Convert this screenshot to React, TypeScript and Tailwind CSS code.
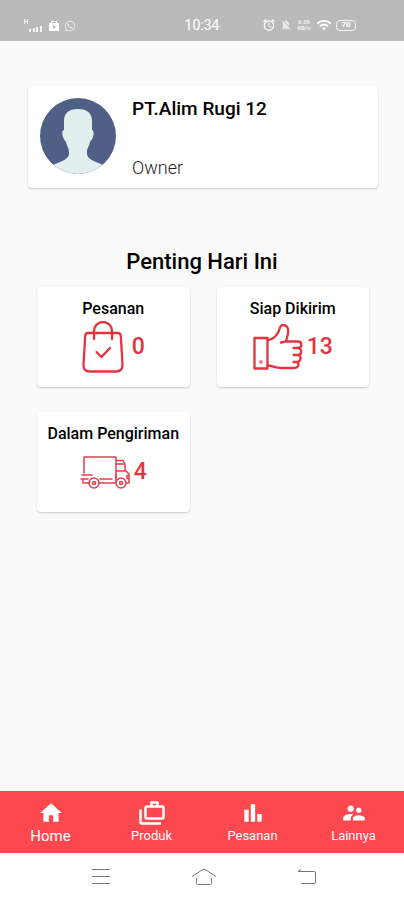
import React from 'react';
import { MdAlarm, MdBarChart, MdHome, MdNotificationsOff, MdSupervisorAccount, MdWifi } from 'react-icons/md';
import { FaWhatsapp } from 'react-icons/fa';

function BagIcon() {
  return (
    <svg width="42" height="52" viewBox="0 0 42 52" fill="none" stroke="#e5343f" strokeWidth="2.300" strokeLinecap="round" strokeLinejoin="round">
      <path d="M6 12H36Q38.500 12 38.800 15L40.500 43Q41 50.500 34 50.500H8Q1 50.500 1.500 43L3.200 15Q3.500 12 6 12Z" />
      <path d="M12 18V10a9 9 0 0 1 18 0v8" />
      <path d="M14.500 31l5 5 8.500-9" />
    </svg>
  );
}

function ThumbIcon() {
  return (
    <svg width="50" height="46" viewBox="0 0 50 46" fill="none" stroke="#e5343f" strokeWidth="2.300" strokeLinecap="round" strokeLinejoin="round">
      <path d="M1.500 14H14.500V44.500H1.500Z" />
      <circle cx="8" cy="38" r="0.500" />
      <path d="M14.500 16C21 16 26 9 27 3.500C28 0 33.500 0 35 5C36 9 34 13 33 17.500H45C49.500 17.500 49.500 24 45 24H40.500" />
      <path d="M28 18.500L33 17.500" />
      <path d="M45 24C49.500 25 49 31 45 31H40.500M45 31C49 32 48 38 44 38H40.500M44 38C47 40 45 44 41 44H28C22 44 19 41.500 14.500 41.500" />
    </svg>
  );
}

function TruckIcon() {
  return (
    <svg width="50" height="33" viewBox="0 0 50 33" fill="none" stroke="#df4149" strokeWidth="1.500" strokeLinecap="round" strokeLinejoin="round">
      <path d="M4 17V1H36V26M2 19H12M1 23H8M3 23V27H9M19 27H36M20 23H32" />
      <path d="M36 4.500H43L45 8V14L49 18V27H46M36 8H45M36 15H45M36 18V22M49 19.500H47V22.500H49" />
      <circle cx="14" cy="27" r="5" />
      <circle cx="14" cy="27" r="1.500" />
      <circle cx="41" cy="27" r="5" />
      <circle cx="41" cy="27" r="1.500" />
    </svg>
  );
}

function CasesIcon() {
  return (
    <svg width="26" height="26" viewBox="0 0 26 26" fill="none" stroke="currentColor" strokeWidth="2.500" strokeLinejoin="round">
      <rect x="6.500" y="6.500" width="18" height="12" rx="1.500" />
      <path d="M12.500 6.500V2.500H18.500V6.500" />
      <path d="M1.500 9.500V22Q1.500 23.500 3 23.500H22" />
    </svg>
  );
}

function Avatar() {
  return (
    <svg width="76" height="76" viewBox="0 0 76 76" className="shrink-0">
      <defs>
        <clipPath id="avatar">
          <circle cx="38" cy="38" r="38" />
        </clipPath>
      </defs>
      <g clipPath="url(#avatar)">
        <path fill="#505f86" d="M0 0H76V76H0Z" />
        <path
          fill="#e3eeee"
          d="M38 11C47 11 52 15 52 23V32C54 32 54 36 53 39C52 42 51 42 50 44C49 49 47 50 47 54C46 61 54 63 63 67L70 76H6L13 67C22 63 30 61 29 54C29 50 27 49 26 44C25 42 24 42 23 39C22 36 22 32 24 32V23C24 15 29 11 38 11Z"
        />
      </g>
    </svg>
  );
}

function StatusBar() {
  return (
    <header className="grid h-[41px] grid-cols-[minmax(0,1fr)_auto_minmax(0,1fr)] items-end bg-[#bababa] px-6 pb-2 text-white">
      <div className="flex items-center gap-1">
        <svg width="20" height="14" viewBox="0 0 20 14" fill="currentColor" opacity="0.850">
          <path d="M0 0h1v2h2V0h1v5H3V3H1v2H0zM5 10h2v3H5zM9 9h2v4H9zM12 8h2v5h-2zM16 7h2v6h-2z" />
        </svg>
        <svg width="12" height="12" viewBox="0 0 12 12" fill="currentColor" fillRule="evenodd">
          <path d="M1 3h2V1h6v2h2v8H1zM4 3h4V2H4zM5 5v4l3-2z" />
        </svg>
        <FaWhatsapp size={12} className="opacity-70" />
      </div>
      <span className="text-sm leading-4">10:34</span>
      <div className="flex items-center justify-end gap-1 pr-6">
        <MdAlarm size={14} />
        <MdNotificationsOff size={12} className="opacity-70" />
        <span className="w-4 text-center text-[6px] leading-[6px] font-bold opacity-80">0.09 KB/s</span>
        <MdWifi size={16} />
        <span className="flex h-[11px] w-5 items-center justify-center rounded-sm border border-white/80 text-[8px] leading-none font-bold">70</span>
      </div>
    </header>
  );
}

const stats = [
  { title: 'Pesanan', count: 0, icon: BagIcon, gap: 'gap-2' },
  { title: 'Siap Dikirim', count: 13, icon: ThumbIcon, gap: 'gap-1' },
  { title: 'Dalam Pengiriman', count: 4, icon: TruckIcon, gap: 'gap-1' },
];

function App() {
  return (
    <div className="flex min-h-screen flex-col bg-[#fafafa] font-['Roboto',sans-serif] text-black">
      <StatusBar />

      <main className="flex-1">
        <section className="mt-[45px] mr-[26px] ml-7 flex items-start gap-4 rounded-sm bg-white px-3 pt-3 pb-[10px] shadow-[0_1px_2px_rgba(0,0,0,0.2)]">
          <Avatar />
          <div className="flex min-h-20 flex-col justify-between">
            <h1 className="text-[19px] leading-[22px] font-medium">PT.Alim Rugi 12</h1>
            <p className="text-lg leading-5 font-light text-[#222]">Owner</p>
          </div>
        </section>

        <h2 className="mt-[61px] text-center text-[22px] leading-[26px] font-medium">Penting Hari Ini</h2>

        <section className="mt-3 grid grid-cols-2 gap-x-[27px] gap-y-[25px] pr-[35px] pl-[37px]">
          {stats.map(({ title, count, icon: Icon, gap }) => (
            <article key={title} className="h-[100px] rounded-sm bg-white pt-3 shadow-[0_1px_2px_rgba(0,0,0,0.2)]">
              <h3 className="text-center text-base leading-5 font-medium whitespace-nowrap">{title}</h3>
              <div className={`flex h-14 items-center justify-center ${gap}`}>
                <Icon />
                <span className="text-[23px] font-medium text-[#e5343f]">{count}</span>
              </div>
            </article>
          ))}
        </section>
      </main>

      <nav className="grid h-[62px] grid-cols-4 bg-[#fd4850] pt-0.5 text-white">
        <a href="#home" className="flex flex-col items-center justify-center text-[15px] leading-5">
          <MdHome size={26} />
          Home
        </a>
        <a href="#produk" className="flex flex-col items-center justify-center text-[13px] leading-5">
          <CasesIcon />
          Produk
        </a>
        <a href="#pesanan" className="flex flex-col items-center justify-center text-[13px] leading-5">
          <MdBarChart size={26} />
          Pesanan
        </a>
        <a href="#lainnya" className="flex flex-col items-center justify-center text-[13px] leading-5">
          <MdSupervisorAccount size={26} />
          Lainnya
        </a>
      </nav>

      <footer className="flex h-[47px] items-center justify-center gap-20 bg-white pl-1 text-[#777]">
        <button type="button" aria-label="Menu">
          <svg width="20" height="18" viewBox="0 0 20 18" stroke="currentColor">
            <path d="M1 1.500H19M1 8.500H19M1 15.500H19" />
          </svg>
        </button>
        <button type="button" aria-label="Home screen">
          <svg width="26" height="18" viewBox="0 0 26 18" fill="none" stroke="currentColor" strokeLinejoin="round">
            <path d="M1 8.500L11 2Q13 1 15 2L25 8.500M5.500 10V15.500Q5.500 16.500 6.500 16.500H19.500Q20.500 16.500 20.500 15.500V10" />
          </svg>
        </button>
        <button type="button" aria-label="Back">
          <svg width="20" height="18" viewBox="0 0 20 18" fill="none" stroke="currentColor" strokeLinejoin="round">
            <path d="M4 1.500L1 3.500H17Q18.500 3.500 18.500 5V14Q18.500 15.500 17 15.500H4" />
          </svg>
        </button>
      </footer>
    </div>
  );
}

export default App;
